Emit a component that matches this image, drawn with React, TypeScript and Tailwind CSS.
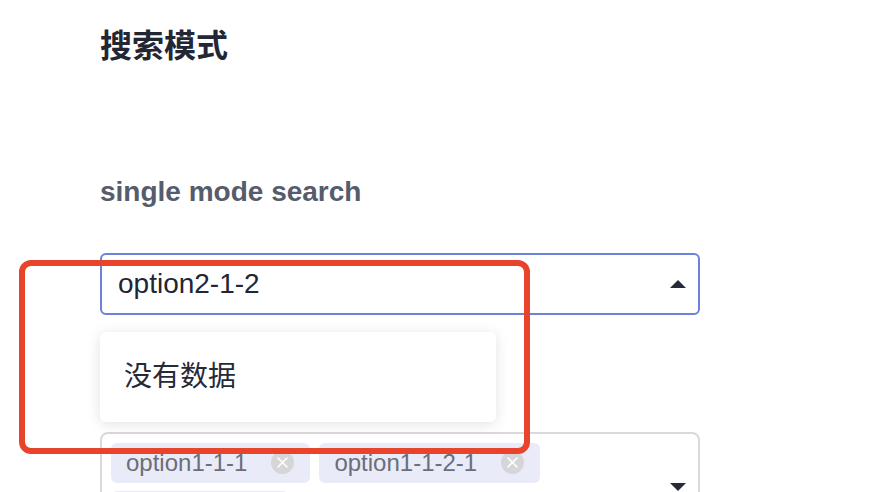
import React from "react";

function Caret({ up }: { up?: boolean }) {
  return (
    <svg width="16" height="8" viewBox="0 0 16 8" className="shrink-0">
      {up ? (
        <polygon points="8,0 16,8 0,8" fill="#272b38" />
      ) : (
        <polygon points="0,0 16,0 8,8" fill="#272b38" />
      )}
    </svg>
  );
}

function Tag({ label }: { label: string }) {
  return (
    <div className="flex h-[40px] items-center gap-[24px] rounded-[6px] bg-[#e9ebf8] pl-[15px] pr-[16px]">
      <span className="text-[24px] leading-[24px] text-[#6b6e79]">{label}</span>
      <span className="flex h-[23px] w-[23px] items-center justify-center rounded-full bg-[#d6d6d9]">
        <svg width="11" height="11" viewBox="0 0 11 11">
          <path d="M1 1L10 10M10 1L1 10" stroke="#fff" strokeWidth="1.6" strokeLinecap="round" />
        </svg>
      </span>
    </div>
  );
}

export default function App() {
  const tags = ["option1-1-1", "option1-1-2-1", "option1-2"];

  return (
    <div className="relative h-[492px] w-[892px] overflow-hidden bg-white font-['Liberation_Sans','Noto_Sans_CJK_SC',sans-serif]">
      <div className="w-[700px] pl-[100px] pt-[30px]">
        <h1 className="text-[32px] font-bold leading-[32px] text-[#232733]">搜索模式</h1>

        <h2 className="mt-[116px] text-[28px] font-bold leading-[28px] text-[#565c6b]">
          single mode search
        </h2>

        {/* single select, open */}
        <div className="relative mt-[47px]">
          <div className="flex h-[62px] items-center justify-between rounded-[6px] border-2 border-[#6c80dc] pl-[16px] pr-[12px]">
            <span className="text-[28px] leading-[28px] text-[#222533]">option2-1-2</span>
            <Caret up />
          </div>
          <div className="absolute left-0 top-[79px] z-10 flex h-[90px] w-[396px] items-center rounded-[6px] bg-white px-[24px] shadow-[0_2px_14px_rgba(0,0,0,0.12)]">
            <span className="text-[28px] leading-[28px] text-[#262a36]">没有数据</span>
          </div>
        </div>

        {/* multiple select */}
        <div className="mt-[117px] flex items-center rounded-[8px] border-2 border-[#d9d9db] py-[8.5px] pl-[9px] pr-[12px]">
          <div className="flex flex-1 flex-wrap gap-x-[9px] gap-y-[8px]">
            {tags.map((t) => (
              <Tag key={t} label={t} />
            ))}
          </div>
          <Caret />
        </div>
      </div>

      {/* annotation frame */}
      <div className="pointer-events-none absolute left-[19px] top-[260px] z-20 h-[194px] w-[511px] rounded-[12px] border-[6px] border-[#e8432b]" />
    </div>
  );
}
